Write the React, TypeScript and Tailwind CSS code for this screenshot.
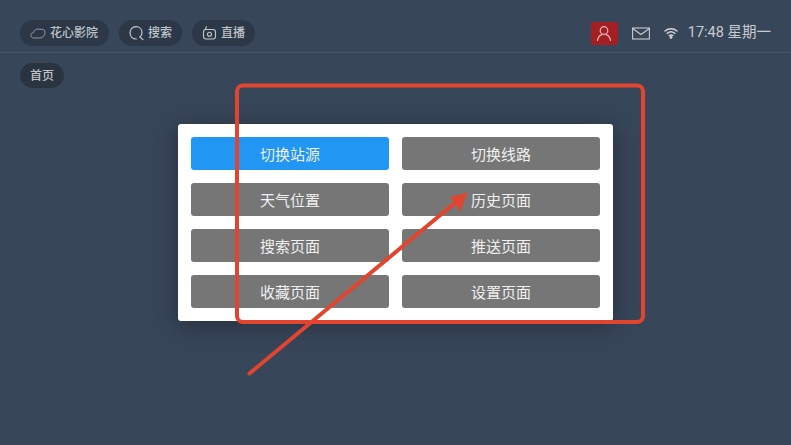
import React from "react";

const font = { fontFamily: '"Roboto","Noto Sans CJK SC",sans-serif' };

function Chip({ icon, label, wide }: { icon: React.ReactNode; label: string; wide?: boolean }) {
  return (
    <div className={`flex h-[26px] items-center gap-[4px] rounded-full bg-[#2c3847] pl-[10px] text-[12px] font-medium text-[#bfc3c9] ${wide ? "pr-[11px]" : "pr-[10px]"}`}>
      {icon}
      <span>{label}</span>
    </div>
  );
}

const btn = "flex h-[33px] w-[198px] items-center justify-center rounded-[3px] pt-[3px] text-[15px] text-[#f0f0f0]";

export default function App() {
  const labels = ["切换线路", "天气位置", "历史页面", "搜索页面", "推送页面", "收藏页面", "设置页面"];
  return (
    <div className="relative h-[445px] w-[791px] overflow-hidden bg-[#384659]" style={font}>
      <header className="flex h-[53px] items-center justify-between border-b border-[#4b5868] pl-[20px] pr-[20px] pt-[20px] pb-[6px]">
        <div className="flex gap-[10px]">
          <Chip
            wide
            label="花心影院"
            icon={
              <svg width="16" height="14" viewBox="0 0 16 14" fill="none" stroke="#9aa1aa" strokeWidth="0.9">
                <path d="M4 12 C1.8 12 0.8 10.6 0.8 9.2 C0.8 7.8 1.9 6.8 3.2 6.8 C3.8 4.6 5.6 3 8 3 C9.6 3 10.4 3.6 11.6 3.3 C13.8 3 15 4.4 15 6.4 C15 9.6 12.8 12 9.6 12 Z" />
              </svg>
            }
          />
          <Chip
            label="搜索"
            icon={
              <svg width="15" height="16" viewBox="0 0 15 16" fill="none" stroke="#c3c7cc" strokeWidth="1.2" strokeLinecap="round">
                <path d="M7.4 14 C3.6 14 1 11.4 1 7.8 C1 4.2 3.6 1.6 7 1.6 C10.6 1.6 13 4.2 13 7.6 C13 9.6 12.3 11 11 12" />
                <path d="M11 12 L14 14.6" />
              </svg>
            }
          />
          <Chip
            label="直播"
            icon={
              <svg width="15" height="16" viewBox="0 0 15 16" fill="none" stroke="#c3c7cc" strokeWidth="1.1" strokeLinecap="round" strokeLinejoin="round">
                <rect x="1.5" y="4.5" width="12" height="9.5" rx="2.5" />
                <path d="M3.4 4.5 L4.4 1.8" />
                <circle cx="7.5" cy="9.2" r="2" />
              </svg>
            }
          />
        </div>
        <div className="flex items-center text-[14.5px] text-[#c8cbd0]">
          <div className="flex h-[23px] w-[27px] items-center justify-center rounded-[3px] bg-[#a31f24]">
            <svg width="16" height="17" viewBox="0 0 16 17" fill="none" stroke="#e6b9bb" strokeWidth="1.2" strokeLinecap="round">
              <circle cx="8" cy="5.5" r="3.8" />
              <path d="M1.5 15.5 C2 12 4.5 10 6 9.6 M14.5 15.5 C14 12 11.5 10 10 9.6" />
            </svg>
          </div>
          <svg className="ml-[14px]" width="18" height="13" viewBox="0 0 18 13" fill="none" stroke="#c8cbd0" strokeWidth="1.1">
            <rect x="0.6" y="1" width="16.8" height="11" />
            <path d="M0.6 1.5 L9 7.5 L17.4 1.5" />
          </svg>
          <svg className="ml-[14px]" width="14" height="12" viewBox="0 0 14 12" fill="none" stroke="#d4d6da" strokeWidth="1.4" strokeLinecap="round">
            <path d="M1 4 C4.4 1 9.6 1 13 4" />
            <path d="M3.2 6.4 C5.4 4.6 8.6 4.6 10.8 6.4" />
            <path d="M5.2 8.6 C6.4 7.7 7.6 7.7 8.8 8.6" />
            <circle cx="7" cy="10.4" r="0.7" fill="#d4d6da" />
          </svg>
          <span className="ml-[10px]">17:48 星期一</span>
        </div>
      </header>

      <nav className="pl-[20px] pt-[10px]">
        <div className="flex h-[25px] w-[44px] items-center justify-center rounded-full bg-[#2a3441] text-[12px] font-medium text-[#bfc3c9]">首页</div>
      </nav>

      <div className="absolute inset-0 flex items-center justify-center">
        <div className="grid grid-cols-2 gap-[13px] rounded-[3px] bg-white p-[13px] shadow-[0_4px_24px_rgba(25,32,45,0.6)]">
          <button className={`${btn} bg-[#2196f3]`}>切换站源</button>
          {labels.map((l) => (
            <button key={l} className={`${btn} bg-[#767676]`}>{l}</button>
          ))}
        </div>
      </div>

      <svg className="pointer-events-none absolute left-0 top-0" width="791" height="445" fill="none">
        <rect x="237" y="85.5" width="406" height="236.5" rx="6" stroke="#e2452f" strokeWidth="4" />
        <path d="M249.5 373.5 L456 202" stroke="#e2452f" strokeWidth="4" strokeLinecap="round" />
        <path d="M467.5 192.5 L450 197 L455 203 L460 212 Z" fill="#e2452f" />
      </svg>
    </div>
  );
}
